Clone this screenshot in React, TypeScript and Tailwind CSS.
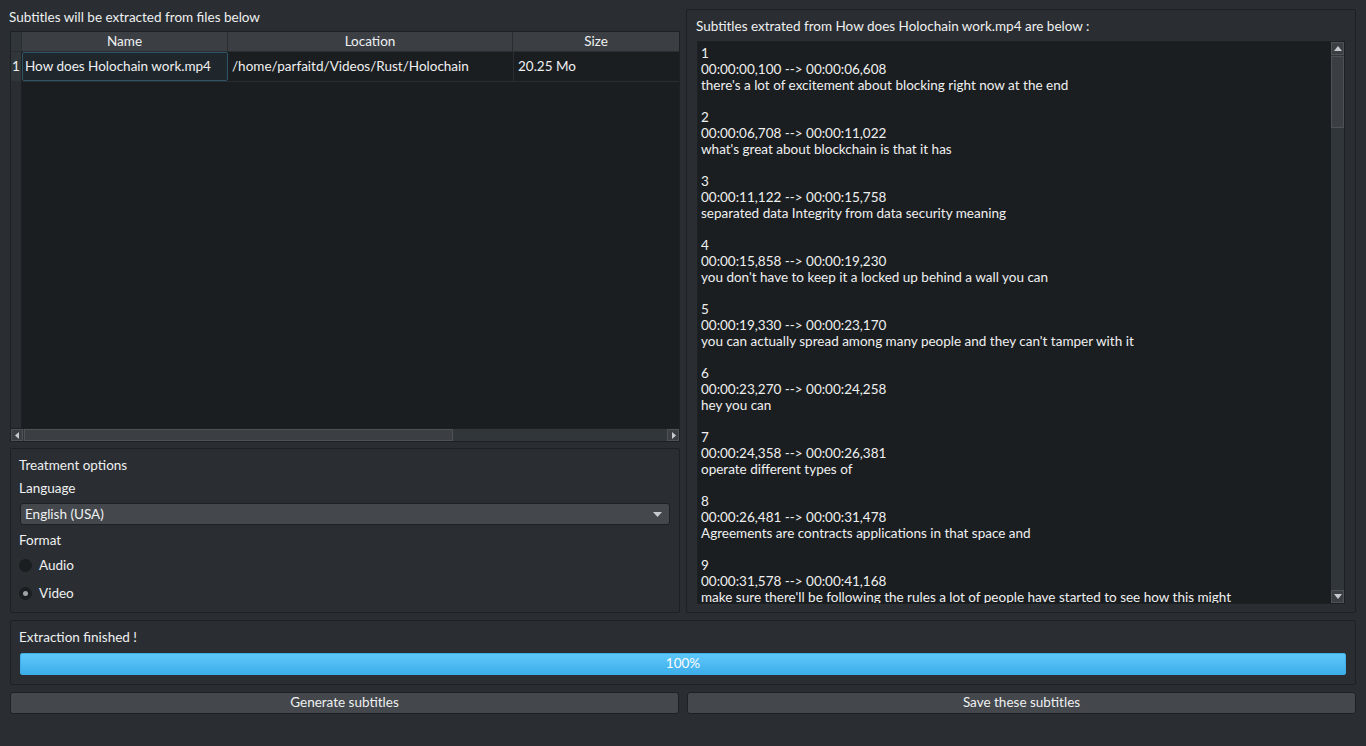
import React from "react";

const subs: [string, string, string][] = [
  ["1", "00:00:00,100 --> 00:00:06,608", "there's a lot of excitement about blocking right now at the end"],
  ["2", "00:00:06,708 --> 00:00:11,022", "what's great about blockchain is that it has"],
  ["3", "00:00:11,122 --> 00:00:15,758", "separated data Integrity from data security meaning"],
  ["4", "00:00:15,858 --> 00:00:19,230", "you don't have to keep it a locked up behind a wall you can"],
  ["5", "00:00:19,330 --> 00:00:23,170", "you can actually spread among many people and they can't tamper with it"],
  ["6", "00:00:23,270 --> 00:00:24,258", "hey you can"],
  ["7", "00:00:24,358 --> 00:00:26,381", "operate different types of"],
  ["8", "00:00:26,481 --> 00:00:31,478", "Agreements are contracts applications in that space and"],
  ["9", "00:00:31,578 --> 00:00:41,168", "make sure there'll be following the rules a lot of people have started to see how this might"],
];

const font = { fontFamily: "Lato, 'Noto Sans', sans-serif" };

export default function App() {
  return (
    <div
      className="w-[1366px] h-[746px] bg-[#2a2e32] text-[#eff0f1] text-[13.5px] overflow-hidden flex flex-col px-[10px] pt-[9px]"
      style={font}
    >
      <div className="flex gap-[6px] h-[604px]">
        {/* Left column */}
        <div className="w-[670px] flex flex-col">
          <div className="h-[22px] leading-[16px] -ml-[1px]">Subtitles will be extracted from files below</div>
          {/* table */}
          <div className="h-[411px] border border-[#1e2124] bg-[#1b1e20] flex flex-col">
            <div className="flex h-[20px] bg-[#3b3f44] border-b border-[#2a2e32]">
              <div className="w-[11px] bg-[#31363b] border-r border-[#2a2e32]" />
              <div className="w-[206px] border-r border-[#2a2e32] flex items-center justify-center">Name</div>
              <div className="w-[285px] border-r border-[#2a2e32] flex items-center justify-center">Location</div>
              <div className="flex-1 flex items-center justify-center">Size</div>
            </div>
            <div className="flex flex-1 min-h-0">
              <div className="w-[11px] flex flex-col bg-[#2a2e32] border-r border-[#1e2124]">
                <div className="h-[30px] bg-[#31363b] flex items-center justify-center border-b border-[#2a2e32]">1</div>
              </div>
              <div className="flex-1 flex flex-col">
                <div className="flex h-[30px] border-b border-[#2a2e32]">
                  <div className="w-[206px] border border-[#2f5466] bg-[#1f272d] rounded-[2px] flex items-center px-[2px]">How does Holochain work.mp4</div>
                  <div className="w-[286px] border-r border-[#2a2e32] flex items-center px-[4px]">/home/parfaitd/Videos/Rust/Holochain</div>
                  <div className="flex-1 flex items-center px-[4px]">20.25 Mo</div>
                </div>
              </div>
            </div>
            {/* h scrollbar */}
            <div className="h-[13px] flex bg-[#31363b] border-t border-[#1e2124]">
              <div className="w-[12px] bg-[#3b3f44] border border-[#4d5257] flex items-center justify-center">
                <svg width="5" height="7" viewBox="0 0 5 7"><path d="M4 0 L0 3.5 L4 7 Z" fill="#c8cbce" /></svg>
              </div>
              <div className="w-[429px] bg-[#3b3f44] border border-[#4d5257] ml-[1px]" />
              <div className="flex-1" />
              <div className="w-[12px] bg-[#3b3f44] border border-[#4d5257] flex items-center justify-center">
                <svg width="5" height="7" viewBox="0 0 5 7"><path d="M1 0 L5 3.5 L1 7 Z" fill="#c8cbce" /></svg>
              </div>
            </div>
          </div>
          {/* treatment options */}
          <div className="mt-[6px] flex-1 border border-[#1e2124] rounded-[2px] px-[8px] pt-[8px] flex flex-col">
            <div className="h-[17px] flex items-center">Treatment options</div>
            <div className="h-[22px] flex items-center mt-[3px]">Language</div>
            <div className="mt-[4px] h-[22px] mx-[1px] bg-[#44484d] border border-[#1e2124] rounded-[3px] flex items-center justify-between px-[4px]">
              <span>English (USA)</span>
              <svg width="9" height="5" viewBox="0 0 9 5" className="mr-[3px]"><path d="M0 0 L9 0 L4.5 5 Z" fill="#c8cbce" /></svg>
            </div>
            <div className="h-[22px] flex items-center mt-[4px]">Format</div>
            <div className="h-[28px] flex items-center gap-[7px]">
              <div className="w-[13px] h-[13px] rounded-full bg-[#1b1e20]" />
              <span>Audio</span>
            </div>
            <div className="h-[28px] flex items-center gap-[7px]">
              <div className="w-[13px] h-[13px] rounded-full bg-[#1b1e20] flex items-center justify-center">
                <div className="w-[5px] h-[5px] rounded-full bg-[#9fa2a5]" />
              </div>
              <span>Video</span>
            </div>
          </div>
        </div>
        {/* Right column */}
        <div className="w-[670px] border border-[#1e2124] rounded-[2px] flex flex-col px-[10px] pt-[7px] pb-[8px]">
          <div className="h-[18px] flex items-center -ml-[1px]">Subtitles extrated from How does Holochain work.mp4 are below :</div>
          <div className="mt-[6px] flex-1 bg-[#1b1e20] border border-[#1e2124] flex min-h-0">
            <div className="flex-1 pl-[3px] pt-[3px] leading-[16px] overflow-hidden">
              {subs.map((s, i) => (
                <div key={i} className="mb-[16px]">
                  <div>{s[0]}</div>
                  <div>{s[1]}</div>
                  <div className="whitespace-nowrap">{s[2]}</div>
                </div>
              ))}
            </div>
            <div className="w-[13px] bg-[#31363b] flex flex-col">
              <div className="h-[13px] bg-[#3b3f44] border border-[#4d5257] flex items-center justify-center">
                <svg width="8" height="5" viewBox="0 0 8 5"><path d="M0 5 L4 0 L8 5 Z" fill="#c8cbce" /></svg>
              </div>
              <div className="h-[72px] bg-[#3b3f44] border border-[#4d5257] mt-[1px]" />
              <div className="flex-1" />
              <div className="h-[13px] bg-[#3b3f44] border border-[#4d5257] flex items-center justify-center">
                <svg width="8" height="5" viewBox="0 0 8 5"><path d="M0 0 L8 0 L4 5 Z" fill="#c8cbce" /></svg>
              </div>
            </div>
          </div>
        </div>
      </div>
      {/* progress group */}
      <div className="mt-[7px] h-[65px] border border-[#1e2124] rounded-[2px] px-[9px] pt-[8px] flex flex-col">
        <div className="h-[17px] flex items-center -ml-[1px]">Extraction finished !</div>
        <div className="mt-[7px] h-[22px] rounded-[2px] border border-[#3daee9] bg-gradient-to-b from-[#5ec8fc] to-[#3daee9] flex items-center justify-center text-[#fcfcfc] leading-none pb-[1px]">100%</div>
      </div>
      {/* buttons */}
      <div className="mt-[7px] flex gap-[8px] h-[22px]">
        <div className="w-[669px] bg-[#44484d] border border-[#1e2124] rounded-[3px] flex items-center justify-center leading-none pb-[1px]">Generate subtitles</div>
        <div className="flex-1 bg-[#44484d] border border-[#1e2124] rounded-[3px] flex items-center justify-center leading-none pb-[1px]">Save these subtitles</div>
      </div>
    </div>
  );
}
